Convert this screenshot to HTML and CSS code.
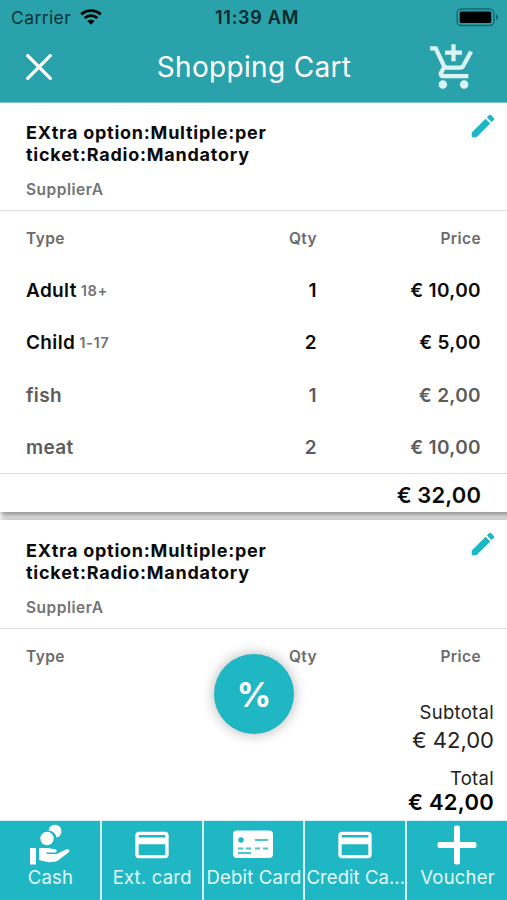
FILE: index.html
```html
<!DOCTYPE html>
<html lang="en">
<head>
<meta charset="utf-8">
<title>Shopping Cart</title>
<link rel="stylesheet" href="styles.css">
</head>
<body>
<svg class="defs" aria-hidden="true">
  <symbol id="pencil" viewBox="0 0 24 24"><path d="M3 17.250V21h3.750L17.810 9.940l-3.750-3.750L3 17.250zM20.710 7.040a1 1 0 0 0 0-1.410l-2.340-2.340a1 1 0 0 0-1.410 0l-1.830 1.830 3.750 3.750 1.830-1.830z"/></symbol>
  <symbol id="card" viewBox="0 0 24 24"><path d="M20 4H4c-1.110 0-1.990.89-1.990 2L2 18c0 1.110.89 2 2 2h16c1.110 0 2-.89 2-2V6c0-1.110-.89-2-2-2zm0 14H4v-6.500h16v6.500zm0-10.500H4V6h16v1.500z"/></symbol>
</svg>
<div class="app">
  <header class="top">
    <div class="status">
      <div class="carrier"><span>Carrier</span>
        <svg width="22" height="16" viewBox="0 0 22 16" fill="none" stroke="#000" stroke-width="2.8"><path d="M1.200 5.400C6.800.3 15.200 .3 20.800 5.400M4.600 9C8.300 5.700 13.700 5.700 17.400 9"/><path d="M11 15.700L7.400 12.100C9.500 10.300 12.500 10.300 14.600 12.100z" fill="#000" stroke="none"/></svg>
      </div>
      <div class="time">11:39 AM</div>
      <svg class="battery" width="43" height="19" viewBox="0 0 43 19"><rect x="1" y="1" width="37" height="16.500" rx="4.500" fill="none" stroke="#17656c" stroke-width="1.300"/><rect x="3.700" y="3.500" width="31.500" height="11.500" rx="1.500"/><path d="M40 6.500c3 1 3 4.500 0 5.500z" fill="#17656c"/></svg>
    </div>
    <nav class="nav">
      <svg class="close" width="26" height="26" viewBox="0 0 26 26"><path d="M1.700 1.700L24.300 24.300M24.300 1.700L1.700 24.300" stroke="#fff" stroke-width="3.300" stroke-linecap="round"/></svg>
      <h1>Shopping Cart</h1>
      <svg class="cart" width="51" height="51" viewBox="0 0 24 24" fill="#dcf3f4"><path d="M11 9h2V6h3V4h-3V1h-2v3H8v2h3v3zm-4 9c-1.100 0-1.990.9-1.990 2S5.900 22 7 22s2-.9 2-2-.9-2-2-2zm10 0c-1.100 0-1.990.9-1.990 2s.89 2 1.990 2 2-.9 2-2-.9-2-2-2zm-9.830-3.250l.03-.12.9-1.630h7.450c.75 0 1.410-.41 1.750-1.030l3.860-7.010L19.420 4h-.01l-1.100 2-2.760 5H8.530l-.13-.27L6.160 6l-.95-2-.94-2H1v2h2l3.600 7.590-1.350 2.450c-.16.28-.25.61-.25.96 0 1.100.9 2 2 2h12v-2H7.420c-.13 0-.25-.11-.25-.25z"/></svg>
    </nav>
  </header>
  <main class="list">
    <section class="item">
      <div class="item-head">
        <div><h2>EXtra option:Multiple:per<br>ticket:Radio:Mandatory</h2><p>SupplierA</p></div>
        <svg class="edit"><use href="#pencil"/></svg>
      </div>
      <div class="rows">
        <div class="row head"><span>Type</span><span>Qty</span><span>Price</span></div>
        <div class="row"><span>Adult <small>18+</small></span><span>1</span><span>€ 10,00</span></div>
        <div class="row"><span>Child <small>1-17</small></span><span>2</span><span>€ 5,00</span></div>
        <div class="row extra"><span>fish</span><span>1</span><span>€ 2,00</span></div>
        <div class="row extra"><span>meat</span><span>2</span><span>€ 10,00</span></div>
      </div>
      <div class="sum">€ 32,00</div>
    </section>
    <section class="item">
      <div class="item-head">
        <div><h2>EXtra option:Multiple:per<br>ticket:Radio:Mandatory</h2><p>SupplierA</p></div>
        <svg class="edit"><use href="#pencil"/></svg>
      </div>
      <div class="rows">
        <div class="row head"><span>Type</span><span>Qty</span><span>Price</span></div>
      </div>
    </section>
  </main>
  <section class="totals">
    <div class="label">Subtotal</div>
    <div class="amount">€ 42,00</div>
    <div class="label total-label">Total</div>
    <div class="amount total">€ 42,00</div>
  </section>
  <button class="discount">%</button>
  <footer class="pay">
    <div><svg width="42" height="42" viewBox="0 0 42 42" fill="#fff"><path d="M19.500 6.500A6.500 6.500 0 1 1 27.500 13.500A8.500 8.500 0 0 0 19.500 6.500z"/><circle cx="18" cy="14.500" r="6.700"/><path d="M1 24h6v16.500H1zM10 24h8.500c3 0 4.500 1 7 1.200 3 .2 3 3.300 0 3.300h-8v1.500h10l9.500-4.500c3-1 4.500 1 2.500 3L29 36.500c-2 1.500-8 2-11 1.500l-8-2z"/></svg><span>Cash</span></div>
    <div><svg width="40" height="42" viewBox="0 0 24 24"><use href="#card" fill="#fff"/></svg><span>Ext. card</span></div>
    <div><svg width="40" height="42" viewBox="0 0 40 42"><rect y="6.500" width="40" height="27.500" rx="4" fill="#fff"/><path d="M5 24.500h5M13 24.500h5M5 29h13M22 16h13M22 24.500h5M30 24.500h5" stroke="#4cc5cf" stroke-width="2"/><circle cx="8" cy="16" r="2.700" fill="#1fb7c3"/></svg><span>Debit Card</span></div>
    <div><svg width="40" height="42" viewBox="0 0 24 24"><use href="#card" fill="#fff"/></svg><span class="tight">Credit Ca...</span></div>
    <div><svg width="42" height="42" viewBox="0 0 42 42"><path d="M18 3.500a2 2 0 0 1 2-2h2a2 2 0 0 1 2 2v14.500h14.500a2 2 0 0 1 2 2v2a2 2 0 0 1-2 2H24v14.500a2 2 0 0 1-2 2h-2a2 2 0 0 1-2-2V24H3.500a2 2 0 0 1-2-2v-2a2 2 0 0 1 2-2H18z" fill="#fff"/></svg><span>Voucher</span></div>
  </footer>
</div>
</body>
</html>
```
FILE: styles.css
```css
* { box-sizing: border-box; }
body { margin: 0; font-family: Inter, sans-serif; color: #0b0b0b; }
h1, h2, p { margin: 0; }
.defs { position: absolute; width: 0; height: 0; }
.app { position: relative; width: 507px; height: 900px; display: flex; flex-direction: column; overflow: hidden; background: #fff; }
.top { height: 103px; flex: none; background: #2aa2ab; border-bottom: 1px solid #7fc6cb; }
.status { height: 34px; display: grid; grid-template-columns: 1fr auto 1fr; align-items: center; padding: 0 8px 0 11px; font-size: 17.500px; }
.carrier { display: flex; align-items: center; gap: 9px; color: #0b3236; letter-spacing: .4px; }
.time { font-size: 18px; font-weight: 600; color: #04282b; letter-spacing: .75px; padding-left: 4px; }
.battery { justify-self: end; }
.nav { height: 68px; display: flex; align-items: center; justify-content: space-between; padding: 0 28px 2px 26px; }
.nav h1 { font-size: 28px; font-weight: 400; color: #fff; letter-spacing: .33px; padding-left: 28px; }
.list { flex: 1; min-height: 0; display: flex; flex-direction: column; gap: 8px; overflow: hidden; }
.item { flex: none; background: #fff; box-shadow: 3px 2px 5px 2px rgba(0,0,0,.4); }
.item-head { height: 108px; display: flex; justify-content: space-between; padding: 19px 9px 0 26px; border-bottom: 1px solid #dedede; }
.item + .item .item-head { height: 109px; padding-top: 20px; }
.item h2 { font-size: 18px; line-height: 22px; font-weight: 700; letter-spacing: .76px; }
.item p { margin-top: 14px; font-size: 15.500px; line-height: 20px; font-weight: 600; color: #737373; letter-spacing: .5px; }
.edit { width: 30px; height: 30px; margin-top: -11px; fill: #1fb7c3; }
.rows { padding: 1px 26px 0; }
.row { height: 52.300px; display: grid; grid-template-columns: 241px 50px 1fr; align-items: center; font-size: 19px; font-weight: 600; letter-spacing: .35px; }
.row span + span { text-align: right; }
.row.head { font-size: 15.500px; color: #6b6b6b; letter-spacing: .4px; }
.row.extra { color: #5c5c5c; }
.row small { font-size: 14.700px; font-weight: 600; color: #737373; margin-left: -1.200px; vertical-align: 1px; letter-spacing: .6px; }
.sum { height: 39px; border-top: 1px solid #dedede; padding: 3px 26px 0; display: flex; align-items: center; justify-content: flex-end; font-size: 22px; font-weight: 600; letter-spacing: .1px; }
.totals { height: 140px; flex: none; background: #fff; padding: 20px 13px 0; text-align: right; }
.label { font-size: 18.500px; line-height: 24px; color: #222; letter-spacing: .3px; }
.amount { font-size: 22px; line-height: 32px; color: #222; }
.total-label { margin-top: 10px; }
.total { font-size: 22px; line-height: 25px; font-weight: 600; color: #000; letter-spacing: .25px; }
.discount { position: absolute; left: 214px; top: 654px; width: 80px; height: 80px; padding: 0; border: 0; border-radius: 50%; background: #1fb7c3; color: #fff; font: 700 34px Inter, sans-serif; box-shadow: 0 0 13px rgba(0,0,0,.3); }
.pay { height: 80px; flex: none; display: grid; grid-template-columns: repeat(5, 1fr); gap: 2px; background: #d8f3f5; padding-top: 1px; }
.pay div { min-width: 0; background: #1fb7c3; display: flex; flex-direction: column; align-items: center; padding-top: 3px; }
.pay span { font-size: 18.500px; line-height: 24px; margin-top: -1px; padding-left: 1px; color: #e5fafb; white-space: nowrap; letter-spacing: .2px; }
.pay .tight { letter-spacing: .05px; }
```
